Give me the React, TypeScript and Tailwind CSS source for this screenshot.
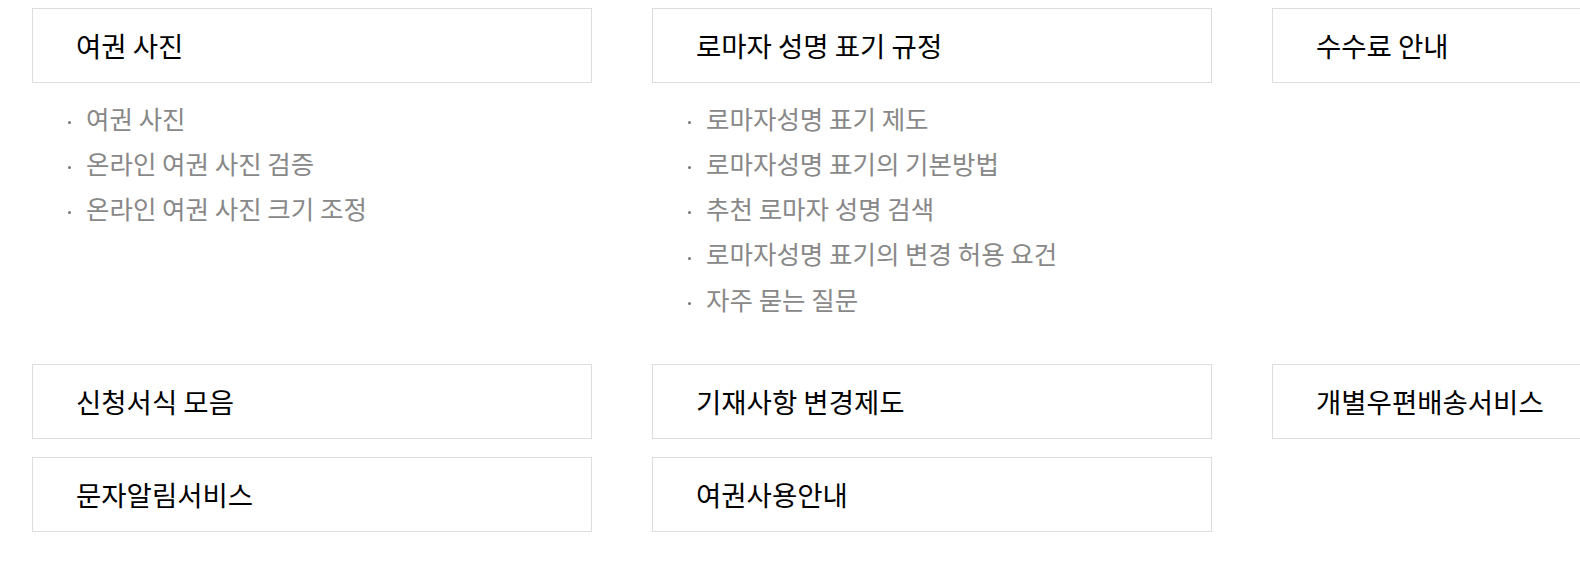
const sections: { title: string; links?: string[] }[] = [
  {
    title: "여권 사진",
    links: ["여권 사진", "온라인 여권 사진 검증", "온라인 여권 사진 크기 조정"],
  },
  {
    title: "로마자 성명 표기 규정",
    links: [
      "로마자성명 표기 제도",
      "로마자성명 표기의 기본방법",
      "추천 로마자 성명 검색",
      "로마자성명 표기의 변경 허용 요건",
      "자주 묻는 질문",
    ],
  },
  { title: "수수료 안내", links: [] },
  { title: "신청서식 모음" },
  { title: "기재사항 변경제도" },
  { title: "개별우편배송서비스" },
  { title: "문자알림서비스" },
  { title: "여권사용안내" },
];

export default function App() {
  return (
    <div
      className="min-h-screen w-full overflow-hidden bg-white"
      style={{ fontFamily: '"Noto Sans CJK KR", "Noto Sans", sans-serif' }}
    >
      <div className="grid w-max grid-cols-[560px_560px_560px] gap-x-[60px] gap-y-[18px] pl-[32px] pt-[8px]">
        {sections.map((s) => (
          <div key={s.title}>
            <a
              href="#"
              className="flex h-[75px] items-center border border-[#dddddd] pl-[43px] text-[27.5px] font-normal text-black"
            >
              {s.title}
            </a>
            {s.links && (
              <ul className="pt-[12px] pb-[25px]">
                {s.links.map((l) => (
                  <li
                    key={l}
                    className="flex h-[45.3px] items-center pl-[36px] text-[25.5px] text-[#888888]"
                  >
                    <span className="mt-[9px] mr-[15px] h-[3px] w-[3px] shrink-0 rounded-full bg-[#777777]" />
                    <span>{l}</span>
                  </li>
                ))}
              </ul>
            )}
          </div>
        ))}
      </div>
    </div>
  );
}
